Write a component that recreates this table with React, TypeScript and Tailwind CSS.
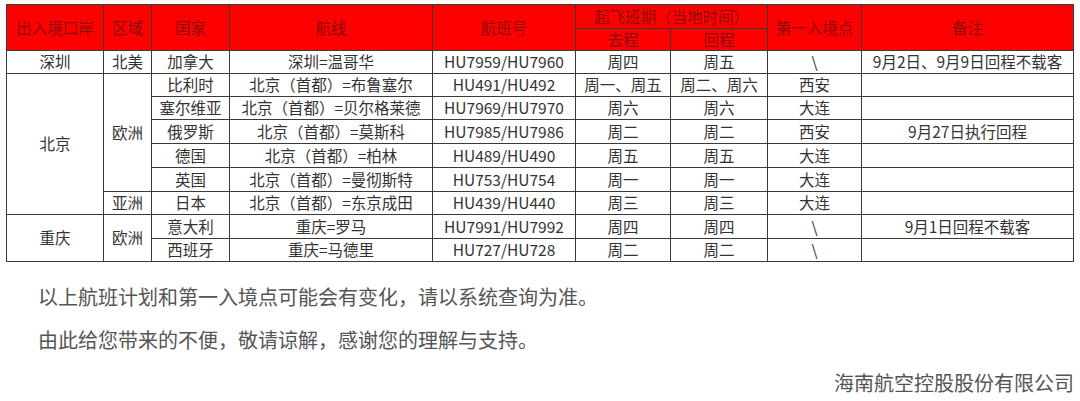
import React from "react";

const font = { fontFamily: '"Noto Sans CJK SC", "Noto Sans", sans-serif' };

type Cell = { t: string; rs?: number };

const bodyH = [23, 23, 23, 24, 24, 24, 23, 24, 23];

export default function App() {
  const td = "border border-[#3a3a3a] text-center align-middle p-0 whitespace-nowrap";
  const th = "border border-[#3a3a3a] text-center align-middle p-0 font-normal whitespace-nowrap bg-[#ff0000] text-[#8a0a0a]";
  return (
    <div className="w-[1080px] h-[401px] bg-white overflow-hidden text-[#333333]" style={font}>
      <div className="pt-[4px] pl-[6px]">
        <table className="border-collapse table-fixed w-[1067px] text-[15.5px] leading-none">
          <colgroup>
            <col className="w-[97px]" />
            <col className="w-[48px]" />
            <col className="w-[78px]" />
            <col className="w-[203px]" />
            <col className="w-[143px]" />
            <col className="w-[95px]" />
            <col className="w-[97px]" />
            <col className="w-[94px]" />
            <col className="w-[212px]" />
          </colgroup>
          <thead>
            <tr className="h-[24px]">
              <th rowSpan={2} className={th}>出入境口岸</th>
              <th rowSpan={2} className={th}>区域</th>
              <th rowSpan={2} className={th}>国家</th>
              <th rowSpan={2} className={th}>航线</th>
              <th rowSpan={2} className={th}>航班号</th>
              <th colSpan={2} className={th}>起飞班期（当地时间）</th>
              <th rowSpan={2} className={th}>第一入境点</th>
              <th rowSpan={2} className={th}>备注</th>
            </tr>
            <tr className="h-[22px]">
              <th className={th}>去程</th>
              <th className={th}>回程</th>
            </tr>
          </thead>
          <tbody>
            <tr style={{ height: bodyH[0] }}>
              <td className={td}>深圳</td>
              <td className={td}>北美</td>
              <td className={td}>加拿大</td>
              <td className={td}>深圳=温哥华</td>
              <td className={td}>HU7959/HU7960</td>
              <td className={td}>周四</td>
              <td className={td}>周五</td>
              <td className={td}>\</td>
              <td className={td}>9月2日、9月9日回程不载客</td>
            </tr>
            <tr style={{ height: bodyH[1] }}>
              <td rowSpan={6} className={td}>北京</td>
              <td rowSpan={5} className={td}>欧洲</td>
              <td className={td}>比利时</td>
              <td className={td}>北京（首都）=布鲁塞尔</td>
              <td className={td}>HU491/HU492</td>
              <td className={td}>周一、周五</td>
              <td className={td}>周二、周六</td>
              <td className={td}>西安</td>
              <td className={td}></td>
            </tr>
            <tr style={{ height: bodyH[2] }}>
              <td className={td}>塞尔维亚</td>
              <td className={td}>北京（首都）=贝尔格莱德</td>
              <td className={td}>HU7969/HU7970</td>
              <td className={td}>周六</td>
              <td className={td}>周六</td>
              <td className={td}>大连</td>
              <td className={td}></td>
            </tr>
            <tr style={{ height: bodyH[3] }}>
              <td className={td}>俄罗斯</td>
              <td className={td}>北京（首都）=莫斯科</td>
              <td className={td}>HU7985/HU7986</td>
              <td className={td}>周二</td>
              <td className={td}>周二</td>
              <td className={td}>西安</td>
              <td className={td}>9月27日执行回程</td>
            </tr>
            <tr style={{ height: bodyH[4] }}>
              <td className={td}>德国</td>
              <td className={td}>北京（首都）=柏林</td>
              <td className={td}>HU489/HU490</td>
              <td className={td}>周五</td>
              <td className={td}>周五</td>
              <td className={td}>大连</td>
              <td className={td}></td>
            </tr>
            <tr style={{ height: bodyH[5] }}>
              <td className={td}>英国</td>
              <td className={td}>北京（首都）=曼彻斯特</td>
              <td className={td}>HU753/HU754</td>
              <td className={td}>周一</td>
              <td className={td}>周一</td>
              <td className={td}>大连</td>
              <td className={td}></td>
            </tr>
            <tr style={{ height: bodyH[6] }}>
              <td className={td}>亚洲</td>
              <td className={td}>日本</td>
              <td className={td}>北京（首都）=东京成田</td>
              <td className={td}>HU439/HU440</td>
              <td className={td}>周三</td>
              <td className={td}>周三</td>
              <td className={td}>大连</td>
              <td className={td}></td>
            </tr>
            <tr style={{ height: bodyH[7] }}>
              <td rowSpan={2} className={td}>重庆</td>
              <td rowSpan={2} className={td}>欧洲</td>
              <td className={td}>意大利</td>
              <td className={td}>重庆=罗马</td>
              <td className={td}>HU7991/HU7992</td>
              <td className={td}>周四</td>
              <td className={td}>周四</td>
              <td className={td}>\</td>
              <td className={td}>9月1日回程不载客</td>
            </tr>
            <tr style={{ height: bodyH[8] }}>
              <td className={td}>西班牙</td>
              <td className={td}>重庆=马德里</td>
              <td className={td}>HU727/HU728</td>
              <td className={td}>周二</td>
              <td className={td}>周二</td>
              <td className={td}>\</td>
              <td className={td}></td>
            </tr>
          </tbody>
        </table>
      </div>
      <div className="flex flex-col gap-[15px] mt-[21px] text-[20px] leading-[28px] text-[#555555]">
        <p className="pl-[38px]">以上航班计划和第一入境点可能会有变化，请以系统查询为准。</p>
        <p className="pl-[38px]">由此给您带来的不便，敬请谅解，感谢您的理解与支持。</p>
        <p className="text-right pr-[6px]">海南航空控股股份有限公司</p>
      </div>
    </div>
  );
}
